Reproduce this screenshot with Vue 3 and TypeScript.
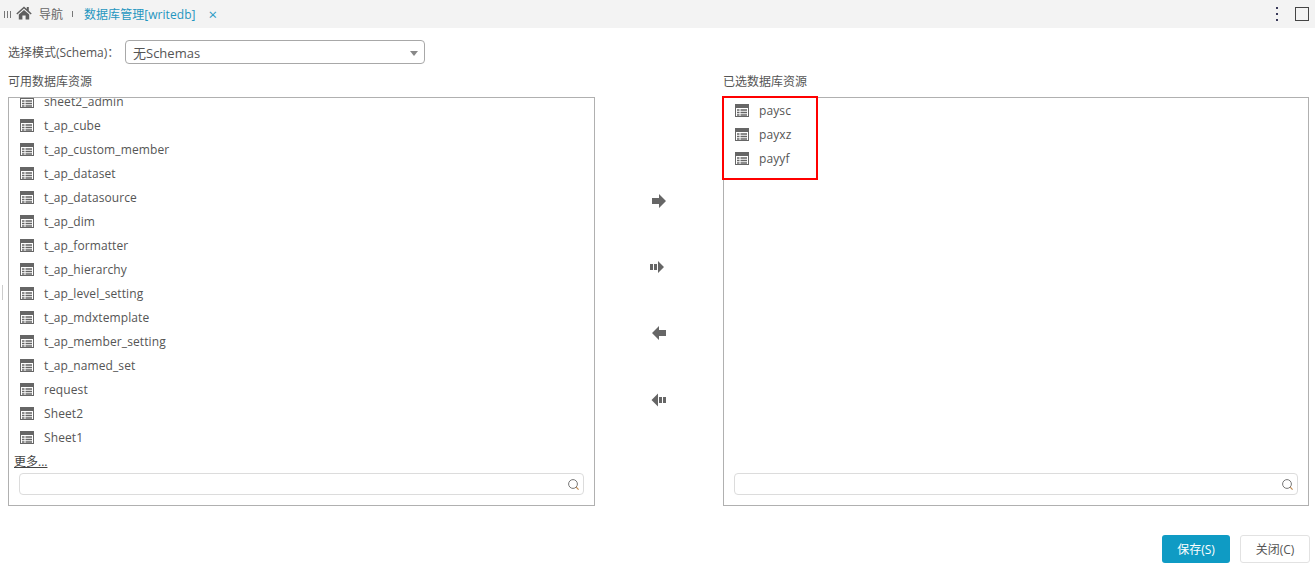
<script setup lang="ts">
const available: string[] = ['sheet2_admin','t_ap_cube','t_ap_custom_member','t_ap_dataset','t_ap_datasource','t_ap_dim','t_ap_formatter','t_ap_hierarchy','t_ap_level_setting','t_ap_mdxtemplate','t_ap_member_setting','t_ap_named_set','request','Sheet2','Sheet1']
const selected: string[] = ['paysc','payxz','payyf']
const gridLines: number[] = [6, 8.5, 11]
</script>

<template>
  <div class="page">
    <header class="tabbar">
      <div class="grip"><i></i><i></i><i></i></div>
      <svg class="home" width="16" height="14" viewBox="0 0 16 14">
        <path d="M8 0.5 L0.3 7.4 L1.3 8.5 L8 2.6 L14.7 8.5 L15.7 7.4 L12.8 4.8 V1 H10.8 V3 Z" fill="#5f5f5f"/>
        <path d="M2.8 8.4 L8 3.9 L13.2 8.4 V13.6 H9.6 V9.6 H6.4 V13.6 H2.8 Z" fill="#5f5f5f"/>
      </svg>
      <span class="tab-nav">导航</span>
      <span class="tab-sep"></span>
      <span class="tab-active">数据库管理[writedb]</span>
      <span class="tab-close">×</span>
      <span class="spacer"></span>
      <div class="dots"><i></i><i></i><i></i></div>
      <div class="square"></div>
    </header>

    <main class="content">
      <div class="schema-row">
        <label class="schema-label">选择模式(Schema)：</label>
        <div class="select">
          <span>无Schemas</span>
          <span class="caret"></span>
        </div>
      </div>

      <div class="columns">
        <section class="col">
          <div class="col-title">可用数据库资源</div>
          <div class="panel">
            <div class="list-view">
              <ul class="list scrolled">
                <li v-for="name in available" :key="name">
                  <svg class="table-icon" width="14" height="13" viewBox="0 0 14 13">
                    <rect x="0.5" y="0.5" width="13" height="12" fill="#fff" stroke="#666"/>
                    <rect x="0" y="0" width="14" height="4" fill="#666"/>
                    <path v-for="y in gridLines" :key="y" :d="`M2 ${y}H4.5M5.5 ${y}H12`" stroke="#666" stroke-width="1.3"/>
                  </svg>
                  <span>{{ name }}</span>
                </li>
              </ul>
            </div>
            <a class="more">更多...</a>
            <div class="search">
              <svg width="13" height="13" viewBox="0 0 13 13">
                <circle cx="6" cy="6" r="4.4" fill="none" stroke="#777" stroke-width="1"/>
                <path d="M9.2 9.2 L11.6 11.6" stroke="#c08a50" stroke-width="1.2"/>
              </svg>
            </div>
          </div>
        </section>

        <nav class="transfer">
          <svg width="16" height="14" viewBox="0 0 16 14"><path d="M1 4H8V0L15 7L8 14V10H1Z" fill="#666"/></svg>
          <svg class="all-right" width="16" height="14" viewBox="0 0 16 14"><path d="M1 4H4V10H1ZM5 4H8V10H5ZM9 1L15 7L9 13Z" fill="#666"/></svg>
          <svg width="16" height="14" viewBox="0 0 16 14"><path d="M15 4H8V0L1 7L8 14V10H15Z" fill="#666"/></svg>
          <svg class="all-left" width="16" height="14" viewBox="0 0 16 14"><path d="M15 4H12V10H15ZM11 4H8V10H11ZM7 0.5L0.5 7L7 13.5Z" fill="#666"/></svg>
        </nav>

        <section class="col right">
          <div class="col-title">已选数据库资源</div>
          <div class="panel">
            <div class="list-view">
              <ul class="list">
                <li v-for="name in selected" :key="name">
                  <svg class="table-icon" width="14" height="13" viewBox="0 0 14 13">
                    <rect x="0.5" y="0.5" width="13" height="12" fill="#fff" stroke="#666"/>
                    <rect x="0" y="0" width="14" height="4" fill="#666"/>
                    <path v-for="y in gridLines" :key="y" :d="`M2 ${y}H4.5M5.5 ${y}H12`" stroke="#666" stroke-width="1.3"/>
                  </svg>
                  <span>{{ name }}</span>
                </li>
              </ul>
            </div>
            <div class="search no-more">
              <svg width="13" height="13" viewBox="0 0 13 13">
                <circle cx="6" cy="6" r="4.4" fill="none" stroke="#777" stroke-width="1"/>
                <path d="M9.2 9.2 L11.6 11.6" stroke="#c08a50" stroke-width="1.2"/>
              </svg>
            </div>
            <div class="highlight"></div>
          </div>
        </section>
      </div>

      <footer class="actions">
        <button class="btn primary">保存(S)</button>
        <button class="btn">关闭(C)</button>
      </footer>
    </main>
    <div class="edge-handle"></div>
  </div>
</template>

<style>
html, body { margin: 0; background: #fff; }
</style>

<style scoped>
.page {
  position: relative;
  width: 1315px;
  height: 583px;
  overflow: hidden;
  background: #fff;
  color: #555;
  font-family: "Open Sans", "Noto Sans CJK SC", sans-serif;
  font-size: 12px;
}
.tabbar {
  height: 28px;
  background: #f3f3f3;
  display: flex;
  align-items: center;
  padding-left: 4px;
  box-sizing: border-box;
}
.grip { display: flex; gap: 2px; width: 8px; height: 7px; margin-right: 4px; }
.grip i { width: 1px; height: 7px; background: #777; }
.home { margin-right: 7px; margin-top: -3px; }
.tab-nav { color: #666; }
.tab-sep { width: 1px; height: 6px; background: #777; margin: 0 11px 0 9px; }
.tab-active { color: #1f96c0; letter-spacing: 0.05px; }
.tab-close { color: #2a9ac4; font-size: 15px; margin-left: 13px; line-height: 1; }
.spacer { flex: 1; }
.dots { display: flex; flex-direction: column; gap: 4px; margin-right: 17px; }
.dots i { width: 2px; height: 2px; background: #3a3a5a; }
.square { width: 12px; height: 12px; border: 1px solid #444; margin-right: 6px; }
.content { padding: 12px 6px 0 8px; }
.schema-row { display: flex; align-items: center; height: 24px; }
.schema-label { width: 117px; color: #555; }
.select {
  width: 300px;
  height: 24px;
  box-sizing: border-box;
  border: 1px solid #a8a8a8;
  border-radius: 4px;
  padding: 0 6px 0 7px;
  display: flex;
  align-items: center;
  justify-content: space-between;
  font-size: 13px;
  color: #555;
}
.caret {
  width: 0; height: 0;
  border-left: 4.5px solid transparent;
  border-right: 4.5px solid transparent;
  border-top: 5px solid #888;
  margin-top: 3px;
}
.columns { display: flex; margin-top: 9px; }
.col { width: 587px; flex: none; }
.col.right { width: 586px; }
.col-title { height: 24px; line-height: 17px; color: #555; }
.panel {
  position: relative;
  height: 409px;
  box-sizing: border-box;
  border: 1px solid #b0b0b0;
  display: flex;
  flex-direction: column;
}
.list-view { flex: 1; min-height: 0; overflow: hidden; }
.list { list-style: none; margin: 0; padding: 0 0 0 11px; letter-spacing: 0.1px; }
.list.scrolled { margin-top: -9px; }
.list li { display: flex; align-items: center; height: 24px; color: #555; }
.table-icon { margin-right: 10px; flex: none; }
.more { height: 16px; line-height: 16px; margin-left: 5px; color: #444; text-decoration: underline; margin-bottom: 3px; }
.search {
  height: 22px;
  box-sizing: border-box;
  margin: 0 10px 10px 10px;
  border: 1px solid #dcdcdc;
  border-radius: 4px;
  display: flex;
  align-items: center;
  justify-content: flex-end;
  padding-right: 3px;
}
.transfer {
  width: 128px;
  flex: none;
  padding-top: 121px;
  box-sizing: border-box;
  display: flex;
  flex-direction: column;
  align-items: center;
  gap: 52px;
}
.all-right { margin-left: -4px; }
.all-left { margin-top: 1px; }
.highlight {
  position: absolute;
  left: -2px;
  top: -2px;
  width: 96px;
  height: 84px;
  box-sizing: border-box;
  border: 2px solid #f00;
}
.actions { display: flex; justify-content: flex-end; gap: 10px; margin-top: 29px; margin-right: -1px; }
.btn {
  width: 70px;
  height: 28px;
  box-sizing: border-box;
  border: 1px solid #e2e2e2;
  border-radius: 3px;
  background: #fff;
  color: #555;
  font: inherit;
  padding: 0;
}
.btn.primary { width: 68px; border: none; background: #0f9bc4; color: #fff; }
.edge-handle { position: absolute; left: 2px; top: 285px; width: 1px; height: 15px; background: #ccc; }
</style>
